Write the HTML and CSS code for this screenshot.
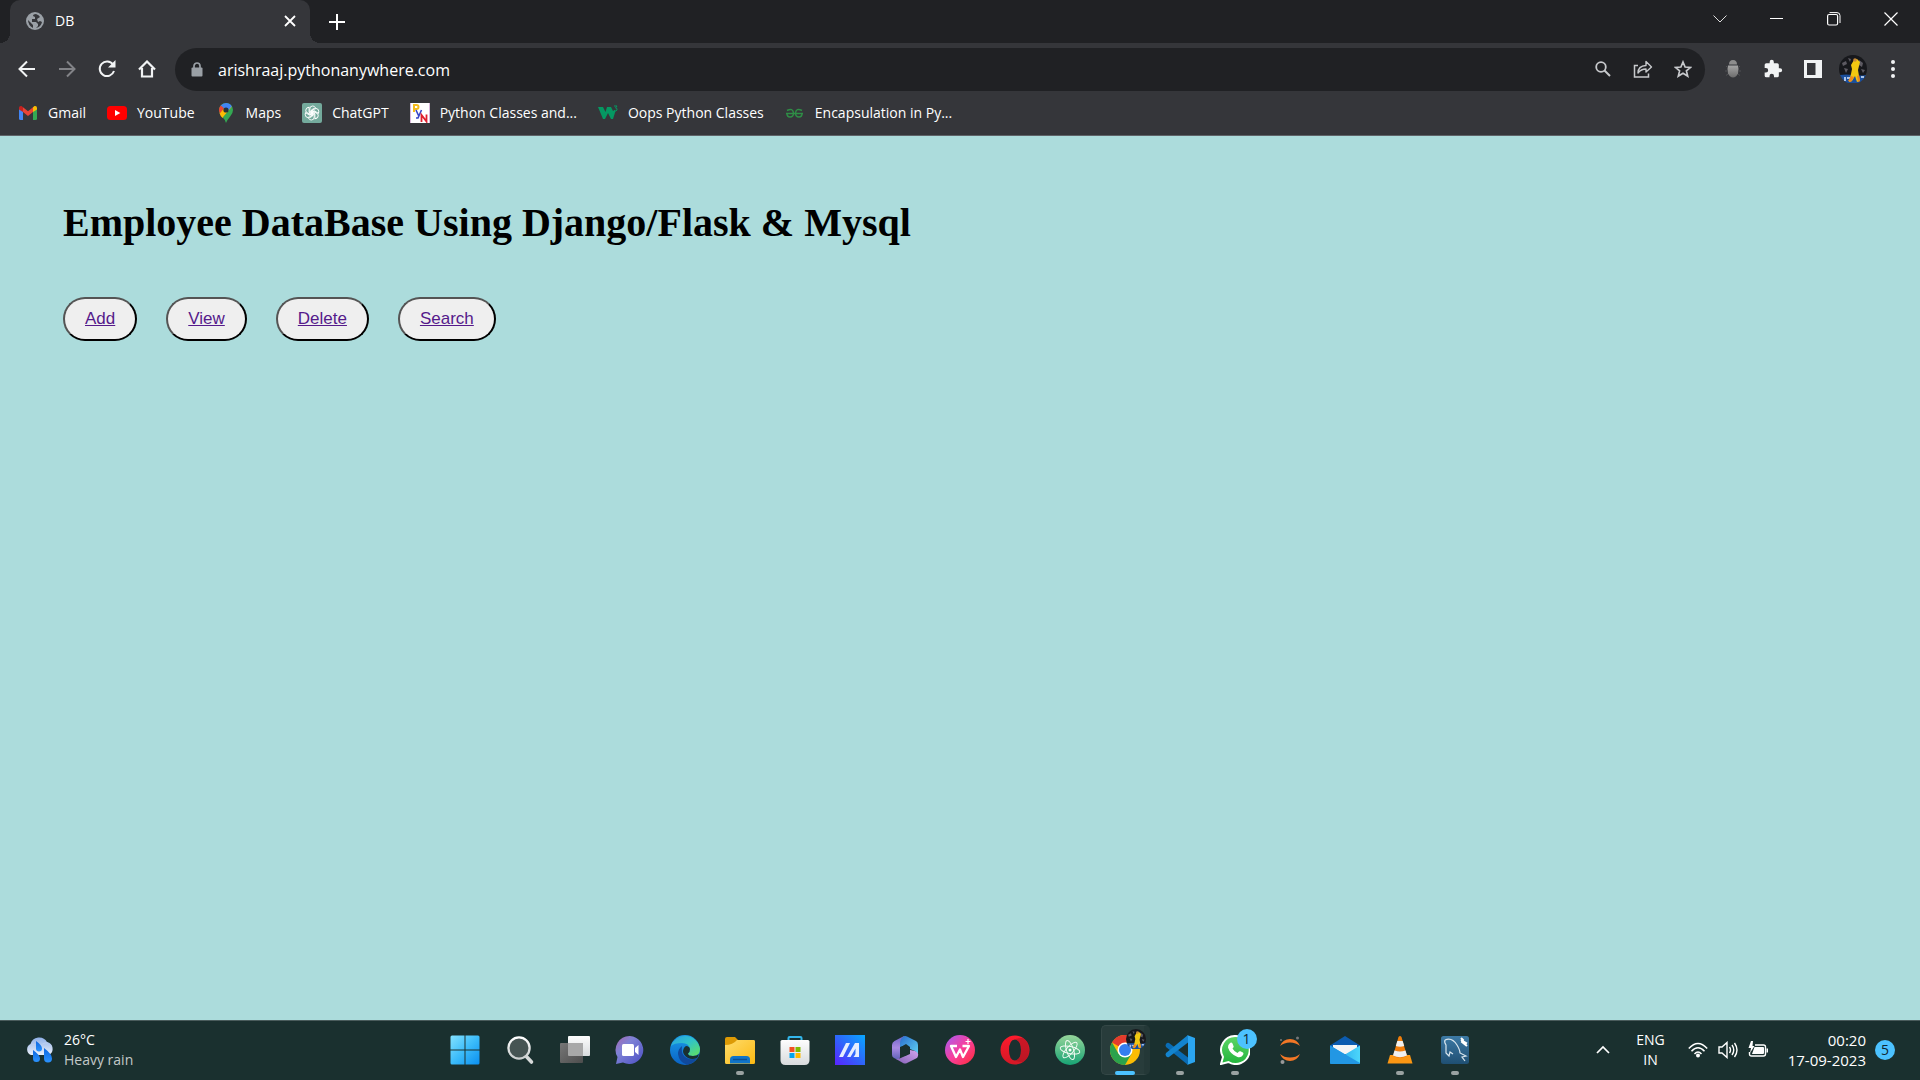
FILE: index.html
```html
<!DOCTYPE html>
<html lang="en">
<head>
<meta charset="utf-8">
<title>DB</title>
<link rel="stylesheet" href="styles.css">
</head>
<body>
<svg class="defs" aria-hidden="true">
  <defs>
    <symbol id="player" viewBox="0 0 28 28">
      <circle cx="14" cy="14" r="14" fill="#17181c"/>
      <path d="M3 8l4-2 1 3-4 2zM20 5l4 3-1 4-3-2zM5 13l4 1-2 4zM22 14l4 1-2 3zM9 3l3 1-1 3z" fill="#5d5a62"/>
      <path d="M1 20q6-1 13 0t13 0a14 14 0 0 1-26 0z" fill="#1b4f9c"/>
      <path d="M5 22h2v4H5zM8 22h3v2H8zM22 21h3v2h-3z" fill="#a9c4ea"/>
      <path d="M15 5l3-1 3 3-1 4-1 4 1 6 1 5-3 1-2-6-3 5-3 1 2-8 1-5-1-4z" fill="#f2c811"/>
      <path d="M12 21l3 1-3 5-3-1zM18 21l2-1 1 6-2 1z" fill="#f08a1c"/>
      <circle cx="16" cy="5" r="1.800" fill="#c98a3a"/>
    </symbol>
    <linearGradient id="winG" x1="0" y1="0" x2="1" y2="1"><stop offset="0" stop-color="#84e2ff"/><stop offset=".5" stop-color="#3cbcfa"/><stop offset="1" stop-color="#0a8ff0"/></linearGradient>
    <linearGradient id="glass" x1="0" y1="0" x2="0" y2="1"><stop offset="0" stop-color="#fff"/><stop offset="1" stop-color="#c9cdcd"/></linearGradient>
    <linearGradient id="tvG" x1="0" y1="0" x2="1" y2="1"><stop offset="0" stop-color="#777"/><stop offset="1" stop-color="#4d4d4d"/></linearGradient>
    <linearGradient id="chatG" x1="0" y1="0" x2="1" y2="1"><stop offset="0" stop-color="#a766ae"/><stop offset=".35" stop-color="#7f82d6"/><stop offset="1" stop-color="#4b4fc4"/></linearGradient>
    <linearGradient id="edgeA" x1="0" y1="0" x2="1" y2="1"><stop offset="0" stop-color="#2a9fe0"/><stop offset=".45" stop-color="#2fc2cc"/><stop offset="1" stop-color="#63e25a"/></linearGradient>
    <linearGradient id="edgeB" x1="0" y1="0" x2="0" y2="1"><stop offset="0" stop-color="#199be8"/><stop offset="1" stop-color="#0a62c4"/></linearGradient>
    <linearGradient id="foldG" x1="0" y1="0" x2="1" y2="1"><stop offset="0" stop-color="#ffdc6b"/><stop offset="1" stop-color="#fbb912"/></linearGradient>
    <linearGradient id="storeG" x1="0" y1="0" x2="0" y2="1"><stop offset="0" stop-color="#fdfdfd"/><stop offset="1" stop-color="#d8dbdd"/></linearGradient>
    <linearGradient id="asusG" x1="0" y1="1" x2="1" y2="0"><stop offset="0" stop-color="#5a22ff"/><stop offset=".5" stop-color="#2e66fb"/><stop offset="1" stop-color="#08a8ff"/></linearGradient>
    <linearGradient id="offA" x1="0" y1="0" x2="0" y2="1"><stop offset="0" stop-color="#6f63c7"/><stop offset=".5" stop-color="#a98be4"/><stop offset="1" stop-color="#5f62b8"/></linearGradient>
    <linearGradient id="offB" x1="0" y1="0" x2="1" y2="1"><stop offset="0" stop-color="#2a6fd0"/><stop offset="1" stop-color="#61d3f2"/></linearGradient>
    <linearGradient id="offC" x1="0" y1="1" x2="1" y2="0"><stop offset="0" stop-color="#8560b8"/><stop offset="1" stop-color="#d3a6ee"/></linearGradient>
    <linearGradient id="wpsG" x1="0" y1="0" x2="1" y2="1"><stop offset="0" stop-color="#a35df8"/><stop offset=".5" stop-color="#f83f9c"/><stop offset="1" stop-color="#ff2b35"/></linearGradient>
    <linearGradient id="operaG" x1="0" y1="0" x2="0" y2="1"><stop offset="0" stop-color="#ff1b2d"/><stop offset="1" stop-color="#d41826"/></linearGradient>
    <linearGradient id="atomG" x1="0" y1="0" x2="0" y2="1"><stop offset="0" stop-color="#96d59a"/><stop offset="1" stop-color="#17a374"/></linearGradient>
    <linearGradient id="waG" x1="0" y1="0" x2="0" y2="1"><stop offset="0" stop-color="#5fd668"/><stop offset="1" stop-color="#22b43c"/></linearGradient>
    <linearGradient id="mailG" x1="0" y1="0" x2="1" y2="0"><stop offset="0" stop-color="#1d9be8"/><stop offset="1" stop-color="#4cd6fb"/></linearGradient>
    <linearGradient id="sqlG" x1="0" y1="0" x2="0" y2="1"><stop offset="0" stop-color="#3d7aa5"/><stop offset="1" stop-color="#1f4f73"/></linearGradient>
    <linearGradient id="cloudG" x1="0" y1="0" x2="0" y2="1"><stop offset="0" stop-color="#8fb0e8"/><stop offset="1" stop-color="#e9effa"/></linearGradient>
    <linearGradient id="dropG" x1="0" y1="0" x2="0" y2="1"><stop offset="0" stop-color="#0c66e0"/><stop offset="1" stop-color="#2b93ff"/></linearGradient>
    <linearGradient id="bugG" x1="0" y1="0" x2="0" y2="1"><stop offset="0" stop-color="#a5a5a5"/><stop offset="1" stop-color="#6c6c6c"/></linearGradient>
  </defs>
</svg>

<header class="browser">
  <div class="tabstrip">
    <div class="tab">
      <svg width="18" height="18" viewBox="0 0 18 18"><circle cx="9" cy="9" r="9" fill="#9aa0a6"/><path d="M10 2q-3 0-3 2l2 1v2H6v3h4l2 2v2l-2 2q5-1 6-6l-2-1-2 1-1-3 3-2q-1-2-4-3zM2 8q0 5 5 8v-3L4 10z" fill="#35363a"/></svg>
      <span class="tab-title">DB</span>
      <button class="plain close-tab" aria-label="Close tab"><svg width="12" height="12" viewBox="0 0 12 12"><path d="M1 1l10 10M11 1L1 11" stroke="#fff" stroke-width="1.800"/></svg></button>
    </div>
    <button class="plain new-tab" aria-label="New tab"><svg width="16" height="16" viewBox="0 0 16 16"><path d="M8 0v16M0 8h16" stroke="#fff" stroke-width="2"/></svg></button>
    <div class="window-controls">
      <button class="plain" aria-label="Search tabs"><svg width="14" height="8" viewBox="0 0 14 8"><path d="M.5 .5L7 7 13.500 .5" fill="none" stroke="#ddd"/></svg></button>
      <button class="plain" aria-label="Minimize"><svg width="13" height="13" viewBox="0 0 13 13"><path d="M0 6.500h13" stroke="#fff"/></svg></button>
      <button class="plain" aria-label="Restore"><svg width="14" height="14" viewBox="0 0 14 14"><rect x=".6" y="2.500" width="10" height="10.500" rx="1.500" fill="none" stroke="#fff" stroke-width="1.200"/><path d="M2.500 .6H10q3 0 3 3V11" fill="none" stroke="#fff"/></svg></button>
      <button class="plain" aria-label="Close"><svg width="14" height="14" viewBox="0 0 14 14"><path d="M.5 .5l13 13M13.500 .5l-13 13" stroke="#fff" stroke-width="1.200"/></svg></button>
    </div>
  </div>

  <div class="toolbar">
    <div class="tools">
      <button class="plain" aria-label="Back"><svg width="18" height="18" viewBox="0 0 18 18"><path d="M17 9H2M9 1.500L1.500 9 9 16.500" fill="none" stroke="#f1f3f4" stroke-width="2"/></svg></button>
      <button class="plain" aria-label="Forward"><svg width="18" height="18" viewBox="0 0 18 18"><path d="M1 9h15M9 1.500L16.500 9 9 16.500" fill="none" stroke="#828387" stroke-width="2"/></svg></button>
      <button class="plain" aria-label="Reload"><svg width="18" height="18" viewBox="0 0 18 18"><path d="M15 4.500A7.300 7.300 0 1 0 16 11" fill="none" stroke="#f1f3f4" stroke-width="2"/><path d="M17.500 0v7.500H10z" fill="#f1f3f4"/></svg></button>
      <button class="plain" aria-label="Home"><svg width="18" height="18" viewBox="0 0 18 18"><path d="M1 9.500L9 1.500l8 8M4 8v8.500h10V8" fill="none" stroke="#f1f3f4" stroke-width="2.200"/></svg></button>
    </div>
    <div class="omnibox">
      <svg width="12" height="16" viewBox="0 0 12 16"><rect x=".5" y="5.500" width="11" height="9" rx="1" fill="#9aa0a6"/><path d="M3 6V4a3 3 0 0 1 6 0v2" fill="none" stroke="#9aa0a6" stroke-width="1.700"/></svg>
      <input class="url" type="text" value="arishraaj.pythonanywhere.com" aria-label="Address">
      <div class="tools">
        <button class="plain" aria-label="Zoom"><svg width="16" height="16" viewBox="0 0 16 16"><circle cx="6" cy="6" r="4.800" fill="none" stroke="#c7c9cc" stroke-width="1.800"/><path d="M9.500 9.500l5.500 5.500" stroke="#c7c9cc" stroke-width="2"/></svg></button>
        <button class="plain" aria-label="Share"><svg width="20" height="18" viewBox="0 0 20 18"><path d="M5 5.500H1.500v11.500h14v-3.500" fill="none" stroke="#c7c9cc" stroke-width="1.500"/><path d="M5 13q0-7 8-7.500V1.500L18.500 7 13 12V9Q8 9 5 13z" fill="none" stroke="#c7c9cc" stroke-width="1.400" stroke-linejoin="round"/></svg></button>
        <button class="plain" aria-label="Bookmark"><svg width="18" height="18" viewBox="0 0 18 18"><path d="M9 2l2.100 5 5.400.4-4.100 3.500 1.300 5.200L9 13.300 4.300 16.100l1.300-5.200L1.500 7.400 6.900 7z" fill="none" stroke="#c7c9cc" stroke-width="1.700"/></svg></button>
      </div>
    </div>
    <div class="tools">
      <button class="plain" aria-label="Bug extension"><svg width="16" height="18" viewBox="0 0 16 18"><path d="M4 4.500Q4 0 8 0t4 4.500z" fill="#8d8d8d"/><path d="M3 5.500h10q1 3 0 8Q11 17.500 8 17.500T3 13.500q-1-5 0-8z" fill="url(#bugG)"/><path d="M2 7L1 6M2 11H0M3 14l-2 1.500M14 7l1-1M14 11h2M13 14l2 1.500" stroke="#505154"/></svg></button>
      <button class="plain" aria-label="Extensions"><svg width="20" height="20" viewBox="0 0 24 24"><path d="M20.500 11H19V7a2 2 0 0 0-2-2h-4V3.500a2.500 2.500 0 0 0-5 0V5H4a2 2 0 0 0-2 2v3.800h1.500a2.700 2.700 0 0 1 0 5.400H2V20a2 2 0 0 0 2 2h3.800v-1.500a2.700 2.700 0 0 1 5.400 0V22H17a2 2 0 0 0 2-2v-4h1.500a2.500 2.500 0 0 0 0-5z" fill="#f1f3f4"/></svg></button>
      <button class="plain" aria-label="Side panel"><svg width="18" height="18" viewBox="0 0 18 18"><path d="M0 0h18v18H0zM3 3v12h8.500V3z" fill="#f1f3f4" fill-rule="evenodd"/></svg></button>
      <button class="plain" aria-label="Profile"><svg width="28" height="28"><use href="#player"/></svg></button>
      <button class="plain" aria-label="Menu"><svg width="4" height="18" viewBox="0 0 4 18"><g fill="#f1f3f4"><circle cx="2" cy="2" r="2"/><circle cx="2" cy="9" r="2"/><circle cx="2" cy="16" r="2"/></g></svg></button>
    </div>
  </div>

  <nav class="bookmarks">
    <a href="#"><svg width="20" height="20" viewBox="0 0 20 20"><path d="M1 4.500v11q0 1.500 1.500 1.500H5V8z" fill="#4285f4"/><path d="M19 4.500v11q0 1.500-1.500 1.500H15V8z" fill="#34a853"/><path d="M5 9V4.300l5 3.900 5-3.900V9l-5 4z" fill="#ea4335"/><path d="M1 6.500V5q0-2.500 2.500-2L5 4.300V9z" fill="#c5221f"/><path d="M19 6.500V5q0-2.500-2.500-2L15 4.300V9z" fill="#fbbc04"/></svg>Gmail</a>
    <a href="#"><svg width="20" height="20" viewBox="0 0 20 20"><rect y="3" width="20" height="14" rx="3.500" fill="#f00"/><path d="M8 7l5.300 3L8 13z" fill="#fff"/></svg>YouTube</a>
    <a href="#"><svg width="20" height="20" viewBox="0 0 20 20"><path d="M10 0a7 7 0 0 1 7 7q0 3-2.500 6Q11.500 16.500 10 20 9 16.500 5.500 13 3 10 3 7a7 7 0 0 1 7-7z" fill="#34a853"/><path d="M16 3.500l-8.500 10-1 1.500Q4 12.500 3.500 10l4.500-5z" fill="#fbbc04"/><path d="M4.700 2.500Q7 0 10 0q3.700 0 5.800 3.200L11 9 7.500 5z" fill="#4285f4"/><path d="M3 7q0-2.500 1.700-4.500L8 5.300 4 10.200Q3 9 3 7z" fill="#ea4335"/><circle cx="10" cy="7" r="2.600" fill="#263238"/></svg>Maps</a>
    <a href="#"><svg width="20" height="20" viewBox="0 0 20 20"><rect width="20" height="20" rx="2" fill="#74aa9c"/><g fill="none" stroke="#fff" stroke-width=".9"><path id="petal" d="M7.800 11.200V6q0-3 2.800-3 2 0 2.900 1.600L9.300 7v4.800"/><use href="#petal" transform="rotate(60 10 10)"/><use href="#petal" transform="rotate(120 10 10)"/><use href="#petal" transform="rotate(180 10 10)"/><use href="#petal" transform="rotate(240 10 10)"/><use href="#petal" transform="rotate(300 10 10)"/></g></svg>ChatGPT</a>
    <a href="#"><svg width="20" height="20" viewBox="0 0 20 20"><path fill="#fff" d="M0 0h20v20H0z"/><path d="M.5 0v20M19.500 0v20" stroke="#d9b8dc"/><path d="M4 9V2h2.500a2 2 0 0 1 0 4H4" fill="none" stroke="#f5bb1c" stroke-width="2"/><path d="M6 7l2.500 5.500M11.500 7L8 15H6" fill="none" stroke="#3746c8" stroke-width="1.600"/><path d="M11.500 19v-7l5 6.500v-7" fill="none" stroke="#e01f2d" stroke-width="1.800"/></svg>Python Classes and...</a>
    <a href="#"><svg width="20" height="20" viewBox="0 0 20 20"><path d="M0 4h5l2.500 5L9 4h4l2 4 1.500-1 1 1-2.500 8h-2L10 10l-3 6H5z" fill="#059862"/><path d="M16 3h3l-1.500 2q2 0 1.500 2t-3 .5" fill="none" stroke="#059862"/></svg>Oops Python Classes</a>
    <a href="#"><svg width="20" height="20" viewBox="0 0 20 20"><g fill="none" stroke="#2f8d46" stroke-width="1.500"><path d="M2 7.500Q8 4.500 8.500 10q0 4-3.500 4-3 0-3-3.500"/><path d="M17 7.500Q11 4.500 10.500 10q0 4 3.500 4 3 0 3-3.500"/><path d="M1 10.500h17"/></g></svg>Encapsulation in Py...</a>
  </nav>
</header>

<main class="page">
  <h1>Employee DataBase Using Django/Flask &amp; Mysql</h1>
  <div class="actions">
    <a class="pill" href="#add">Add</a>
    <a class="pill" href="#view">View</a>
    <a class="pill" href="#delete">Delete</a>
    <a class="pill" href="#search">Search</a>
  </div>
</main>

<footer class="taskbar">
  <div class="weather">
    <svg width="30" height="30" viewBox="0 0 30 30"><path d="M6 20a6 6 0 0 1-.5-11A9 9 0 0 1 22 7a7 7 0 0 1 2 13z" fill="url(#cloudG)"/><path d="M6 9q5-1 8 4 3-6 9-5" fill="none" stroke="#bccff0"/><path d="M8 15q7 5 7 8.500a3.500 3.500 0 0 1-7 0z" fill="url(#dropG)"/><path d="M19 13q8 6 8 10.500a4 4 0 0 1-8 0z" fill="url(#dropG)"/><path d="M11 6q6 4 6 7.500a3 3 0 0 1-6 0z" fill="url(#dropG)"/></svg>
    <div><div>26°C</div><div class="dim">Heavy rain</div></div>
  </div>

  <div class="apps">
    <button class="plain app" aria-label="Start"><svg width="30" height="30" viewBox="0 0 30 30"><path d="M.5 2a1.500 1.500 0 0 1 1.500-1.500h12.500v14H.5zM15.500 .5H28A1.500 1.500 0 0 1 29.500 2v12.500h-14zM.5 15.500h14v14H2A1.500 1.500 0 0 1 .5 28zM15.500 15.500h14V28a1.500 1.500 0 0 1-1.500 1.500H15.500z" fill="url(#winG)"/></svg></button>
    <button class="plain app" aria-label="Search"><svg width="30" height="30" viewBox="0 0 30 30"><path d="M20 20l6.500 7" stroke="#d7dada" stroke-width="3.600" stroke-linecap="round"/><circle cx="14" cy="13" r="10.600" fill="#465453" stroke="url(#glass)" stroke-width="2.300"/></svg></button>
    <button class="plain app" aria-label="Task view"><svg width="30" height="30" viewBox="0 0 30 30"><rect x="8" y="1" width="22" height="20" rx="1" fill="url(#storeG)"/><rect y="8" width="23" height="20" rx="1" fill="url(#tvG)"/><path d="M8 8h15v13H9q-1 0-1-1z" fill="#a8a8a8"/></svg></button>
    <button class="plain app" aria-label="Chat"><svg width="30" height="30" viewBox="0 0 30 30"><path d="M15 1a14 14 0 1 1-7 26.500L1 29l1.500-7A14 14 0 0 1 15 1z" fill="url(#chatG)"/><rect x="7" y="9" width="12" height="12" rx="1.500" fill="#fff"/><path d="M20 13l3.500-3v10L20 17z" fill="#fff"/></svg></button>
    <button class="plain app" aria-label="Edge"><svg width="30" height="30" viewBox="0 0 30 30"><circle cx="15" cy="15" r="15" fill="url(#edgeB)"/><path d="M1 11A15 15 0 0 1 30 14q0 7-7 7-5 0-5-2.500 2-1.500 2-4.500-1-6-8-6Q4 8 1 11z" fill="url(#edgeA)"/><path d="M12 11q-4 3-4 8 1 8 9 10.800Q23 29 27 23q-4 2-8 1-6-2-7-7-.5-3 0-6z" fill="#10499c"/><path d="M20 14q0 3-2 4.500Q18 21 23 21q4 0 6-2-1 3-2 4-5 2-9 0-5-3-5-7 1-5 4-5 3 1 3 3z" fill="#1a302f"/></svg></button>
    <button class="plain app running" aria-label="File Explorer"><svg width="30" height="30" viewBox="0 0 30 30"><path d="M0 4q0-2 2-2h8l3 3v6H0z" fill="#dd9a05"/><path d="M0 10q8 0 12-5h17q1 0 1 1.500v21q0 1.500-1.500 1.500h-27Q0 29 0 27.500z" fill="url(#foldG)"/><path d="M5 28.500v-4Q5 21 8.500 21h13q3.500 0 3.500 3.500v4z" fill="#1074c9"/><path d="M8 24.500h14" stroke="#0b4f94" stroke-width="1.400"/></svg></button>
    <button class="plain app" aria-label="Microsoft Store"><svg width="30" height="30" viewBox="0 0 30 30"><path d="M8.500 7V3q0-1 1-1h11q1 0 1 1v4" fill="none" stroke="#33b7ec" stroke-width="2"/><path d="M.5 6.500q0-1.500 1.500-1.500h26q1.500 0 1.500 1.500V25q0 5-5 5h-19q-5 0-5-5z" fill="url(#storeG)"/><path d="M9.500 12h5v5h-5z" fill="#f25022"/><path d="M15.500 12h5v5h-5z" fill="#7fba00"/><path d="M9.500 18h5v5h-5z" fill="#00a4ef"/><path d="M15.500 18h5v5h-5z" fill="#ffb900"/></svg></button>
    <button class="plain app" aria-label="MyASUS"><svg width="30" height="30" viewBox="0 0 30 30"><path d="M0 0h30v30H0z" fill="url(#asusG)"/><path d="M4 22L11 8h4L8 22zM12 22L20 8h4v14h-3.500V13.500L15.500 22z" fill="#e5edff"/><path d="M18.500 22l3-4v4z" fill="#e5edff"/></svg></button>
    <button class="plain app" aria-label="Microsoft 365"><svg width="30" height="30" viewBox="0 0 30 30"><path d="M14 1L4.500 6Q2 7.500 2 10v10q0 2 2 3l3 1.500q3 .5 3-3V11l7-8z" fill="url(#offA)"/><path d="M13 2q2-1.500 4-.5L26 6q2 1 2 4v10q-1-3-3-4l-5-2-4-4-6 2V8q0-4 3-6z" fill="url(#offB)"/><path d="M20 15l5 1q4 2 3 5-.5 2-2 2.500L17 28q-2 1-4 0l-7-4q4 0 7-2l7-3z" fill="url(#offC)"/><path d="M11 12l5-3 4 3v6l-5 3-4-2z" fill="#1a302f"/></svg></button>
    <button class="plain app" aria-label="WPS Office"><svg width="30" height="30" viewBox="0 0 30 30"><circle cx="15" cy="15" r="15" fill="url(#wpsG)"/><path d="M12 11H6l5 11 4-7.500L18 22l6-11h-6.500" fill="none" stroke="#fff" stroke-width="2.300" stroke-linejoin="round"/><path d="M23 4v5M20.500 6.500h5" stroke="#fff" stroke-width="1.200"/></svg></button>
    <button class="plain app" aria-label="Opera"><svg width="30" height="30" viewBox="0 0 30 30"><path d="M15 .5a14.500 14.500 0 1 0 0 29 14.500 14.500 0 0 0 0-29zm0 4q6 1 6 10.500T15 25.500Q9 25 9 15t6-10.500z" fill="url(#operaG)" fill-rule="evenodd"/><path d="M15 4.500q4-2 8-1.500 6 4 6 12t-6 12q-4 .5-8-1.500 6-1 6-10.500T15 4.500z" fill="#9d1420" opacity=".5"/></svg></button>
    <button class="plain app" aria-label="Atom"><svg width="30" height="30" viewBox="0 0 30 30"><circle cx="15" cy="15" r="15" fill="url(#atomG)"/><g fill="none" stroke="#f0faf2"><ellipse cx="15" cy="15" rx="10" ry="3.500" transform="rotate(12 15 15)"/><ellipse cx="15" cy="15" rx="10" ry="3.500" transform="rotate(72 15 15)"/><ellipse cx="15" cy="15" rx="10" ry="3.500" transform="rotate(132 15 15)"/></g><circle cx="15" cy="15" r="1.500" fill="#fff"/></svg></button>
    <button class="plain app active" aria-label="Chrome"><svg width="30" height="30" viewBox="0 0 30 30"><circle cx="15" cy="15" r="15" fill="#fbbc04"/><path d="M15 15L2 7.500A15 15 0 0 1 28 7.500H15z" fill="#e33b2e"/><path d="M2 7.500A15 15 0 0 0 15 30l6.500-11.300L15 15l-6.500 3.700z" fill="#2ba24c"/><circle cx="15" cy="15" r="7.500" fill="#fff"/><circle cx="15" cy="15" r="6" fill="#347ef0"/></svg><svg class="app-avatar" width="20" height="20"><use href="#player"/></svg></button>
    <button class="plain app running" aria-label="Visual Studio Code"><svg width="30" height="30" viewBox="0 0 30 30"><path d="M1 9q1.500-2 3-1L23 22.500V30L1 12q-1-1.500 0-3z" fill="#0a6cb5"/><path d="M1 21q1.500 2 3 1L23 7.500V0L1 18q-1 1.500 0 3z" fill="#1384cf"/><path d="M22 0l8 3v24l-8 3q1 0 1-2V2q0-2-1-2z" fill="#2ba5f0"/></svg></button>
    <button class="plain app running" aria-label="WhatsApp"><svg width="30" height="30" viewBox="0 0 30 30"><path d="M15.500 1a14 14 0 1 1-7 26L1 29l2-7A14 14 0 0 1 15.500 1z" fill="url(#waG)" stroke="#fff" stroke-width="2"/><path d="M10 8q1.500-1 2.500.5l1.200 3q0 1-1.200 2 2 3.500 5 4.500l1.500-1.500q.7-.6 1.500-.2l2.500 1.200q1 1 0 2.500-2 3-5.500 2Q10 19 8 12.500 7.800 9.500 10 8z" fill="#fff"/></svg><span class="count">1</span></button>
    <button class="plain app" aria-label="Jupyter"><svg width="30" height="30" viewBox="0 0 30 30"><path d="M5 11Q8 4 15 4t10 7Q21 7.500 15 7.500T5 11zM5 19q3 7 10 7t10-7q-4 3.500-10 3.500T5 19z" fill="#f37726"/><circle cx="7.500" cy="27" r="2" fill="#999"/><circle cx="22.500" cy="3" r="1.500" fill="#777"/><circle cx="6" cy="5" r="1" fill="#777"/></svg></button>
    <button class="plain app" aria-label="Mail"><svg width="30" height="30" viewBox="0 0 30 30"><path d="M0 10.500L15 1l15 9.500v5H0z" fill="#0c5cb0"/><path d="M3 10h24v9H3z" fill="#f5f5f5"/><path d="M0 10.500l15 9 15-9v17q0 1.500-1.500 1.500h-27Q0 29 0 27.500z" fill="url(#mailG)"/><path d="M0 10.500L30 28q0 1-1.500 1h-27Q0 29 0 27.500z" fill="#2297e4"/></svg></button>
    <button class="plain app running" aria-label="VLC"><svg width="30" height="30" viewBox="0 0 30 30"><path d="M5 20h20l2.500 8.500h-25z" fill="#fb9613"/><path d="M13.500 2q1.500-2 3 0L22 21q-7 4-14 0z" fill="#f07e0c"/><path d="M12.300 6h5.400l1.500 5q-4 1.500-8.400 0zM9.500 15.500q5.500 2 11 0l1.500 5q-7 3.500-14 0z" fill="#efefef"/></svg></button>
    <button class="plain app running" aria-label="MySQL Workbench"><svg width="30" height="30" viewBox="0 0 30 30"><rect x="1" y="1" width="28" height="28" rx="2.500" fill="url(#sqlG)"/><path d="M5 5q7-3 12 5 3 5 3 8l6 3-4 1 3 4M5 5q-1 2 1 5v8l3 3 1-4 3 2" fill="none" stroke="#d9e6ee" stroke-width="1.200"/><path d="M21 3l2 2-1 2 5 4M21 5l6 3.500" fill="none" stroke="#fff" stroke-width="2"/></svg></button>
  </div>

  <div class="tray">
    <button class="plain" aria-label="Show hidden icons"><svg width="14" height="10" viewBox="0 0 14 10"><path d="M1 8l6-6 6 6" fill="none" stroke="#fff" stroke-width="1.700"/></svg></button>
    <div class="lang">ENG<br>IN</div>
    <div class="status">
      <svg width="20" height="16" viewBox="0 0 20 16"><g fill="none" stroke="#fff" stroke-width="1.500"><path d="M.8 6.500q9.200-10 18.400 0M3.500 9.300q6.500-7 13 0M6.500 12q3.500-3.800 7 0"/></g><circle cx="10" cy="13.500" r="2" fill="#fff"/></svg>
      <svg width="20" height="18" viewBox="0 0 20 18"><g fill="none" stroke="#fff" stroke-width="1.400"><path d="M1 6h3l5-4.500v15L4 12H1zM11.500 6q2 3 0 6M14 4q3.500 5 0 10M16.500 2q5 7 0 14"/></g></svg>
      <svg width="20" height="18" viewBox="0 0 20 18"><path d="M7 4h8.500Q17.500 4 17.500 6v7q0 2-2 2h-12q-2 0-2-2v-2" fill="none" stroke="#fff" stroke-width="1.400"/><path d="M6.500 6H15q1 0 1 1v5q0 1-1 1H4zM18.500 7.500H20v4h-1.500zM3 0L.5 7H3l-1 5 4.500-7H4.500L5 0z" fill="#fff"/></svg>
    </div>
    <div class="clock">00:20<br>17-09-2023</div>
    <span class="notice">5</span>
  </div>
</footer>
</body>
</html>
```
FILE: styles.css
```css
* { box-sizing: border-box; }

body {
  margin: 0;
  min-height: 100vh;
  display: flex;
  flex-direction: column;
  font: 14px/20px "Open Sans", "Noto Sans", sans-serif;
  color: #fff;
  background: #acdcdc;
}

svg { display: block; flex: none; }
.defs { position: absolute; width: 0; height: 0; }

.plain {
  padding: 0;
  border: 0;
  background: none;
  color: inherit;
  font: inherit;
  display: flex;
  align-items: center;
  justify-content: center;
}

/* Browser frame */
.browser { background: #35363a; border-bottom: 1px solid #5f6368; }

.tabstrip {
  display: flex;
  height: 43px;
  padding-left: 10px;
  background: #202124;
}

.tab {
  position: relative;
  display: flex;
  align-items: center;
  gap: 11px;
  width: 300px;
  padding: 0 14px 1px 16px;
  background: #35363a;
  border-radius: 10px 10px 0 0;
}

/* Flared feet where the tab meets the toolbar */
.tab::before,
.tab::after {
  content: "";
  position: absolute;
  bottom: 0;
  width: 10px;
  height: 10px;
}
.tab::before { left: -10px; background: radial-gradient(circle at 0 0, #202124 10px, #35363a 10px); }
.tab::after { right: -10px; background: radial-gradient(circle at 100% 0, #202124 10px, #35363a 10px); }

.tab-title { flex: 1; }
.new-tab { width: 54px; }

.window-controls { display: flex; height: 37px; margin-left: auto; padding-right: 1px; }
.window-controls .plain { width: 57px; }

.toolbar {
  display: flex;
  align-items: center;
  gap: 8px;
  padding: 5px 7px 0 7px;
}

.tools { display: flex; }
.tools .plain { width: 40px; height: 42px; padding-bottom: 2px; }

.omnibox {
  flex: 1;
  display: flex;
  align-items: center;
  height: 43px;
  padding: 0 2px 0 16px;
  border-radius: 22px;
  background: #202124;
}

.url {
  flex: 1;
  min-width: 0;
  margin: 0;
  padding: 0 0 0 15px;
  border: 0;
  outline: 0;
  background: none;
  color: #fff;
  font: 16px/24px "Open Sans", "Noto Sans", sans-serif;
}

.bookmarks {
  display: flex;
  align-items: center;
  gap: 21px;
  height: 44px;
  padding-left: 18px;
}
.bookmarks a {
  display: flex;
  align-items: center;
  gap: 10px;
  color: #fff;
  text-decoration: none;
  white-space: nowrap;
}

/* Page */
.page { flex: 1; padding: 64px 63px; color: #000; }

h1 {
  margin: 0;
  font: bold 40px/46px "Liberation Serif", "Times New Roman", serif;
}

.actions { display: flex; gap: 29px; margin-top: 51px; }

.pill {
  padding: 10px 20px;
  border: 2px outset #000;
  border-radius: 22px;
  background: #efefef;
  color: #551a8b;
  font: 17px/20px "Liberation Sans", Arial, sans-serif;
}

/* Taskbar */
.taskbar {
  display: grid;
  grid-template-columns: 1fr auto 1fr;
  height: 60px;
  padding-bottom: 2px;
  border-top: 1px solid #4a5c5c;
  background: #1a302f;
}

.weather {
  display: flex;
  align-items: center;
  gap: 9px;
  padding-left: 25px;
}
.dim { color: #c3c9c9; }

.apps { display: flex; align-items: center; }
.app { position: relative; width: 55px; height: 50px; }

.running::after,
.active::after {
  content: "";
  position: absolute;
  bottom: 0;
  width: 8px;
  height: 4px;
  border-radius: 2px;
  background: #9aa2a2;
}
.active::after { width: 20px; background: #4cc2ff; }

/* Stacked plate: a second window shows as a rim on the right */
.active::before {
  content: "";
  position: absolute;
  inset: 0 3px;
  border: 1px solid #344746;
  border-right-width: 6px;
  border-right-color: #243837;
  border-radius: 5px;
  background: #283c3b;
}
.active svg { position: relative; }
.active .app-avatar { position: absolute; top: 4px; right: 7px; }

.count {
  position: absolute;
  top: 4px;
  right: 6px;
  width: 20px;
  height: 20px;
  border-radius: 10px;
  background: #4cc2ff;
  color: #10262f;
}

.tray {
  display: flex;
  align-items: center;
  justify-content: flex-end;
  padding-right: 25px;
}
.lang { margin: 0 23px 0 26px; text-align: center; }
.status { display: flex; align-items: center; gap: 10px; margin-right: 20px; }
.clock { font-size: 15px; text-align: right; }
.notice {
  width: 20px;
  height: 20px;
  margin-left: 9px;
  border-radius: 10px;
  background: #4cc2ff;
  color: #10262f;
  text-align: center;
}
```
